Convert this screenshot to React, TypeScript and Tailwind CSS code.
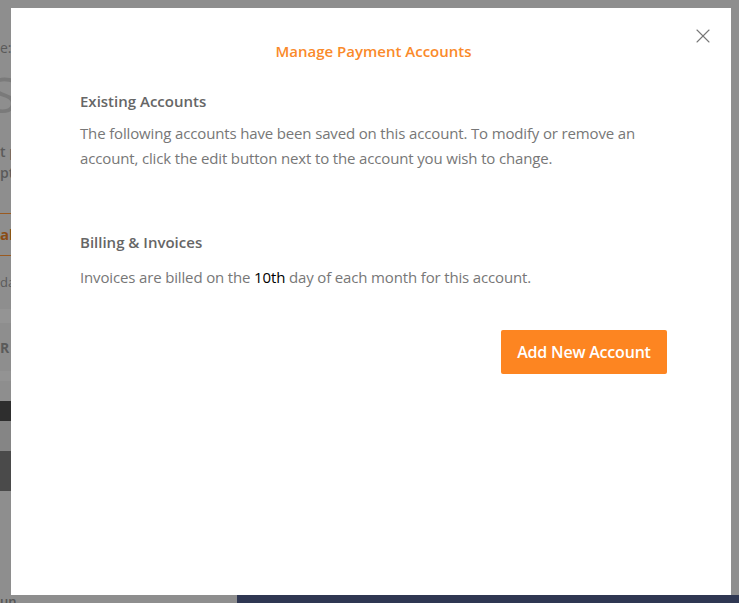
import React from 'react';
import { X } from 'lucide-react';

const font = { fontFamily: '"Open Sans", "Noto Sans", sans-serif' };

const Backdrop: React.FC = () => (
    <div className="absolute inset-0 flex bg-[#8e8e8e]">
        <div className="w-[237px] flex flex-col text-[#5a5a5a]">
            <div className="h-[40px]"></div>
            <div className="h-[16px] text-[14px] leading-[16px]">e:</div>
            <div className="mt-[10px] h-[56px] text-[50px] leading-[56px] text-[#7a7a7a] -ml-[10px]">S</div>
            <div className="mt-[20px] h-[20px] text-[14px] leading-[20px] font-semibold">t p</div>
            <div className="mt-[1px] h-[20px] text-[14px] leading-[20px] font-semibold">pt</div>
            <div className="mt-[30px] border-t border-[#9a5a20] h-[42px] flex items-center text-[15px] font-bold text-[#8a4c14]">al</div>
            <div className="border-t border-[#9a5a20] h-[54px] flex items-center text-[13px]">da</div>
            <div className="h-[14px] bg-[#949494]"></div>
            <div className="h-[48px] flex items-center text-[14px] font-bold">R</div>
            <div className="h-[10px] bg-[#939393]"></div>
            <div className="h-[20px]"></div>
            <div className="h-[20px] bg-[#2e2e2e]"></div>
            <div className="h-[30px] bg-[#858585]"></div>
            <div className="h-[40px] bg-[#4a4a4a]"></div>
            <div className="flex-1"></div>
            <div className="h-[10px] text-[13px] leading-[16px] text-[#555] font-semibold overflow-hidden">un</div>
        </div>
        <div className="flex-1 flex flex-col">
            <div className="flex-1"></div>
            <div className="h-[8px] bg-[#2f3752]"></div>
        </div>
    </div>
);

const App: React.FC = () => {
    return (
        <div className="relative w-[739px] h-[603px] overflow-hidden" style={font}>
            <Backdrop />
            <div className="absolute left-[11px] top-[8px] w-[720px] h-[587px] bg-white">
                <button className="absolute right-[16px] top-[16px] text-[#777]">
                    <X className="h-[24px] w-[24px]" strokeWidth={1.1} />
                </button>
                <div className="pt-[33px] pl-[69px] pr-[64px]">
                    <h1 className="text-center text-[15px] leading-[20px] font-semibold text-[#fa8a2a]">
                        Manage Payment Accounts
                    </h1>

                    <h2 className="mt-[30px] text-[15px] leading-[20px] font-semibold text-[#666]">
                        Existing Accounts
                    </h2>
                    <p className="mt-[10px] text-[15px] leading-[25px] text-[#777] tracking-[-0.15px]">
                        The following accounts have been saved on this account. To modify or remove an account, click the edit button next to the account you wish to change.
                    </p>

                    <h2 className="mt-[61px] text-[15px] leading-[20px] font-semibold text-[#666]">
                        Billing &amp; Invoices
                    </h2>
                    <p className="mt-[13px] text-[15px] leading-[25px] text-[#777] tracking-[-0.15px]">
                        Invoices are billed on the <span className="text-black">10th</span> day of each month for this account.
                    </p>

                    <div className="mt-[40px] flex justify-end">
                        <button className="w-[166px] h-[44px] rounded-[2px] bg-[#fd8521] text-white text-[16px] font-semibold tracking-[-0.2px]">
                            Add New Account
                        </button>
                    </div>
                </div>
            </div>
        </div>
    );
};

export default App;
